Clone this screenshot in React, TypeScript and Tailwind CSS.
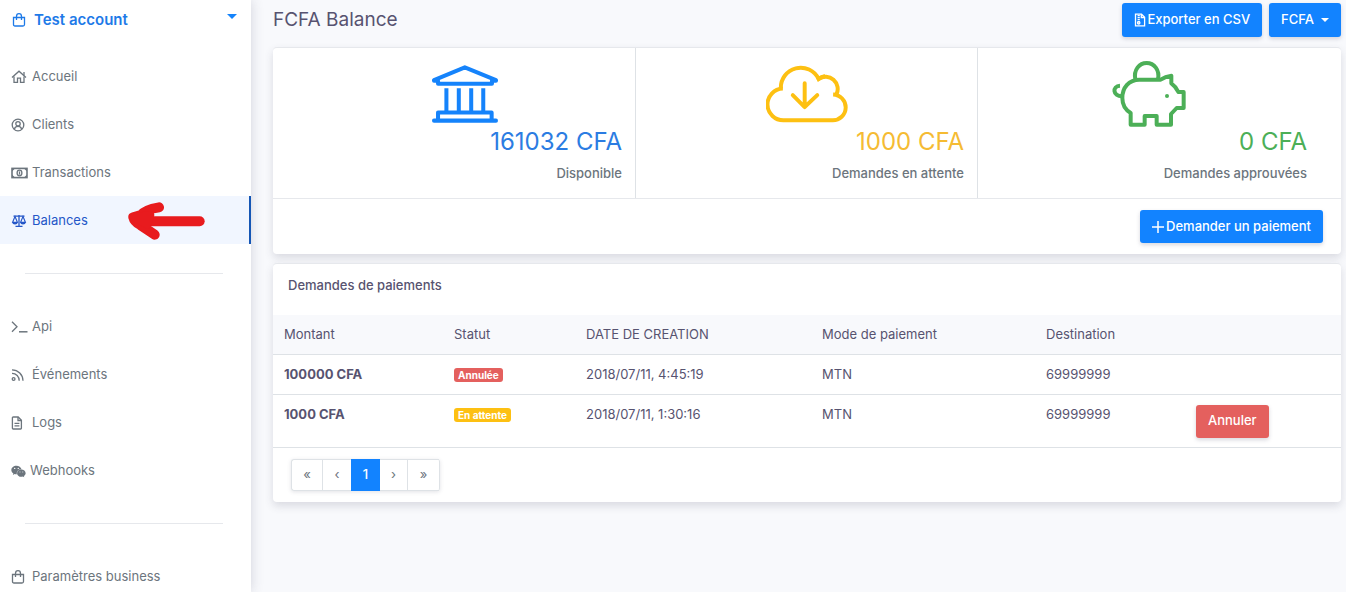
import type { ReactNode } from 'react';
import { FaWeixin } from 'react-icons/fa';

const LineIcon = ({ children }: { children: ReactNode }) => (
  <svg className="h-4 w-[17px] shrink-0" viewBox="0 0 17 16" fill="none" stroke="currentColor" strokeWidth="1.3" aria-hidden="true">
    {children}
  </svg>
);

const BagIcon = () => (
  <LineIcon>
    <path d="M1.5 5.5H12.5V12.5Q12.5 14 11 14H3Q1.5 14 1.5 12.5Z" />
    <path d="M4.5 8V4.5A2.5 2.8 0 0 1 9.5 4.5V8" />
  </LineIcon>
);

const HomeIcon = () => (
  <LineIcon>
    <path d="M1 8.6L8 2.2L15 8.6" />
    <path d="M3 7.5V13.4H6.5V9.2H9.5V13.4H13V7.5M13 3V6.5" />
  </LineIcon>
);

const UserIcon = () => (
  <LineIcon>
    <circle cx="7" cy="8" r="5.8" />
    <circle cx="7" cy="6.8" r="2.2" />
    <path d="M3.4 12Q4 9.4 7 9.4T10.6 12" />
  </LineIcon>
);

const MoneyIcon = () => (
  <LineIcon>
    <rect x="1" y="3.4" width="15" height="9.2" strokeWidth="1.6" />
    <ellipse cx="8.5" cy="8" rx="2.4" ry="2.8" />
    <path d="M8.5 6.4V9.6" />
    <path d="M1 3.5H4L1 6.5ZM16 3.5H13L16 6.5ZM1 12.5H4L1 9.5ZM16 12.5H13L16 9.5Z" fill="currentColor" stroke="none" />
  </LineIcon>
);

const ScaleIcon = () => (
  <LineIcon>
    <path d="M2.5 3.2H13.5M8 2V13.4M4.5 13.4H11.5" />
    <path d="M4 3.5L1.6 9.3H6.4ZM12 3.5L9.6 9.3H14.4Z" strokeWidth="1.1" />
    <path d="M1 9H7Q6.5 11.5 4 11.5T1 9ZM9 9H15Q14.5 11.5 12 11.5T9 9Z" fill="currentColor" stroke="none" />
  </LineIcon>
);

const TerminalIcon = () => (
  <LineIcon>
    <path d="M1 2.8L6 7.8L1 12.8" />
    <path d="M8 12.8H16.5" strokeWidth="1.5" />
  </LineIcon>
);

const FeedIcon = () => (
  <LineIcon>
    <circle cx="2.6" cy="12" r="1.4" />
    <path d="M1 6.3A7.2 7.2 0 0 1 8.2 13.8M1 2.8A11 11 0 0 1 12 13.8" />
  </LineIcon>
);

const FileIcon = () => (
  <LineIcon>
    <path d="M1.4 2.8Q1.4 2 2.2 2H7.2L10.4 5.2V13.2Q10.4 14 9.6 14H2.2Q1.4 14 1.4 13.2Z" />
    <path d="M7 2V5.5H10.4M3.5 8.3H8.4M3.5 10.8H8.4" />
  </LineIcon>
);

const ZipIcon = () => (
  <svg className="h-3.5 w-[13px]" viewBox="0 0 13 14" fill="none" stroke="currentColor" strokeWidth="1.3" aria-hidden="true">
    <path d="M1.5 1.2H7.5L10.6 4.2V12.8H1.5Z" />
    <path d="M7.3 1.2V4.5H10.6" />
    <path d="M4.7 2V10.5" strokeWidth="2.2" strokeDasharray="1.2 0.7" />
    <circle cx="4.7" cy="9.8" r="1.2" />
  </svg>
);

const PlusIcon = () => (
  <svg className="h-3 w-3" viewBox="0 0 12 12" fill="none" stroke="currentColor" strokeWidth="1.5" aria-hidden="true">
    <path d="M0 6H12M6 0V12" />
  </svg>
);

type NavItemProps = {
  icon: ReactNode;
  label: string;
  active?: boolean;
  children?: ReactNode;
};

const NavItem = ({ icon, label, active, children }: NavItemProps) => {
  return (
    <li className="relative">
      <a
        href="#"
        className={
          active
            ? 'flex h-12 items-center gap-1 border-r-2 border-[#1556b5] bg-[#f1f6ff] pt-0.5 pl-[11px] text-[#2456c8]'
            : 'flex h-12 items-center gap-1 pt-0.5 pl-[11px] text-[#6c757d] hover:text-[#1e7cf0]'
        }
      >
        {icon}
        {label}
      </a>
      {children}
    </li>
  );
};

const Divider = () => <hr className="mr-7 mb-7 ml-[25px] mt-[29px] border-[#e6e8ec]" />;

const RedArrow = () => (
  <svg className="absolute top-[5px] left-[127px] h-10 w-[79px]" viewBox="0 0 237 120" fill="none" stroke="#e81b1e" strokeWidth="30" strokeLinecap="round" strokeLinejoin="round" aria-hidden="true">
    <path d="M35 61H218" />
    <path d="M96 19Q54 26 42 42L19 49Q22 62 40 72L83 101" />
    <path d="M20 49L70 42L60 70Z" fill="#e81b1e" strokeWidth="24" />
  </svg>
);

const BankIcon = () => (
  <svg className="h-[58px] w-[66px]" viewBox="96 62 197 173" fill="none" stroke="#1583fb" strokeWidth="12" strokeLinejoin="round" aria-hidden="true">
    <path d="M102 109V107L194 69L287 107V109H275V118H114V109Z" />
    <path d="M139 131V200M176 131V200M213 131V200M249 131V200" />
    <path d="M114 228V204H274V228" />
    <path d="M102 228H287" strokeLinecap="round" />
  </svg>
);

const CloudIcon = () => (
  <svg className="h-[58px] w-[82px]" viewBox="77 62 248 173" fill="none" stroke="#fdc012" strokeWidth="12" aria-hidden="true">
    <path d="M122 132A60 60 0 0 1 236 103A37 37 0 0 1 290 150" />
    <path d="M128 132A48 48 0 0 0 131 228H278A39 39 0 0 0 280 150" />
    <path d="M232 106Q242 98 256 94" />
    <path d="M194 116V188M158 152L194 188L232 152" strokeLinecap="round" strokeLinejoin="round" />
  </svg>
);

const PigIcon = () => (
  <svg className="h-[66px] w-[74px]" viewBox="68 185 222 198" fill="none" stroke="#4caf57" strokeWidth="12" strokeLinejoin="round" aria-hidden="true">
    <path d="M124 376V341C106 330 99 312 99 296C99 265 119 241 150 241H214Q228 231 246 229V252Q260 262 267 278H283V326H262L245 344V376H202V350H166V376Z" />
    <path d="M138 240C132 212 150 191 172 191S212 212 206 240" />
    <path d="M98 291C70 291 68 260 92 259" />
    <circle cx="233" cy="290" r="6" fill="#4caf57" stroke="none" />
  </svg>
);

const Sidebar = () => {
  return (
    <aside className="z-10 w-[251px] shrink-0 bg-white shadow-[0_0_12px_rgba(60,60,90,0.2)]">
      <button type="button" className="flex h-[52px] w-full items-start pt-2 pr-3.5 pl-3 text-[15px] font-semibold text-[#1e7ae8]">
        <span className="mt-1">
          <BagIcon />
        </span>
        <span className="ml-[5px] leading-6">Test account</span>
        <span className="mt-1.5 ml-auto border-x-[5px] border-t-[5px] border-x-transparent border-t-[#1583fb]" />
      </button>
      <nav>
        <ul>
          <NavItem icon={<HomeIcon />} label="Accueil" />
          <NavItem icon={<UserIcon />} label="Clients" />
          <NavItem icon={<MoneyIcon />} label="Transactions" />
          <NavItem icon={<ScaleIcon />} label="Balances" active>
            <RedArrow />
          </NavItem>
        </ul>
        <Divider />
        <ul>
          <NavItem icon={<TerminalIcon />} label="Api" />
          <NavItem icon={<FeedIcon />} label="Événements" />
          <NavItem icon={<FileIcon />} label="Logs" />
          <NavItem icon={<FaWeixin className="text-[15px]" />} label="Webhooks" />
        </ul>
        <Divider />
        <ul>
          <NavItem icon={<BagIcon />} label="Paramètres business" />
        </ul>
      </nav>
    </aside>
  );
};

type StatProps = {
  icon: ReactNode;
  amount: string;
  label: string;
  color: string;
  className: string;
};

const Stat = ({ icon, amount, label, color, className }: StatProps) => {
  return (
    <div className={`h-[150px] text-right ${className}`}>
      <div className="flex h-20 items-center justify-center pt-3">{icon}</div>
      <div className={`pr-[13px] text-2xl leading-7 ${color}`}>{amount}</div>
      <div className="mt-[7px] pr-[13px] leading-5 font-medium text-[#6c757d]">{label}</div>
    </div>
  );
};

const BalanceCard = () => {
  return (
    <section className="rounded-sm border-t border-[#e6e8ec] bg-white shadow-[0_4px_8px_rgba(60,60,90,0.16)]">
      <div className="grid grid-cols-3 px-[21px]">
        <Stat icon={<BankIcon />} amount="161032 CFA" label="Disponible" color="text-[#2b7ce2]" className="border-r border-[#dee2e6]" />
        <Stat icon={<CloudIcon />} amount="1000 CFA" label="Demandes en attente" color="text-[#f5bb33]" className="border-r border-[#dee2e6]" />
        <Stat icon={<PigIcon />} amount="0 CFA" label="Demandes approuvées" color="text-[#4caf57]" className="" />
      </div>
      <div className="flex justify-end border-t border-[#e6e8ec] px-[18px] py-[11px]">
        <button type="button" className="flex h-[33px] items-center gap-0.5 rounded-[3px] bg-[#1283ff] px-3 font-medium text-white shadow-[0_2px_4px_rgba(60,60,90,0.2)]">
          <PlusIcon />
          Demander un paiement
        </button>
      </div>
    </section>
  );
};

const requests = [
  { amount: '100000 CFA', status: 'Annulée', date: '2018/07/11, 4:45:19', mode: 'MTN', destination: '69999999', pending: false },
  { amount: '1000 CFA', status: 'En attente', date: '2018/07/11, 1:30:16', mode: 'MTN', destination: '69999999', pending: true },
];

const Pagination = () => {
  const link = 'flex h-8 items-center justify-center border-l border-[#dee2e6]';
  return (
    <nav aria-label="Pagination" className="flex px-[18px] py-[11px]">
      <div className="flex rounded-[3px] border-r border-[#dee2e6] text-[#6c757d] shadow-[0_1px_4px_rgba(60,60,90,0.15)]">
        <button type="button" className={`${link} w-[31px] rounded-l-[3px] border-y`}>«</button>
        <button type="button" className={`${link} w-[29px] border-y`}>‹</button>
        <button type="button" className="h-8 w-[29px] bg-[#1283ff] font-medium text-white">1</button>
        <button type="button" className="h-8 w-[27px] border-y border-[#dee2e6]">›</button>
        <button type="button" className={`${link} w-8 border-y`}>»</button>
      </div>
    </nav>
  );
};

const RequestsCard = () => {
  return (
    <section className="mt-[9px] rounded-sm border-t border-[#e6e8ec] bg-white shadow-[0_4px_8px_rgba(60,60,90,0.16)]">
      <h2 className="px-[15px] pt-[11px] pb-5 leading-5 font-medium">Demandes de paiements</h2>
      <table className="w-full table-fixed text-left">
        <colgroup>
          <col className="w-[170px]" />
          <col className="w-[132px]" />
          <col className="w-[236px]" />
          <col className="w-[224px]" />
          <col className="w-[150px]" />
          <col className="w-[156px]" />
        </colgroup>
        <thead className="bg-[#f8f9fc]">
          <tr className="h-[39px] border-b border-[#dee2e6]">
            <th className="px-[11px] font-normal">Montant</th>
            <th className="px-[11px] font-normal">Statut</th>
            <th className="px-[11px] font-normal">DATE DE CREATION</th>
            <th className="px-[11px] font-normal">Mode de paiement</th>
            <th className="px-[11px] font-normal">Destination</th>
            <th aria-label="Actions"></th>
          </tr>
        </thead>
        <tbody>
          {requests.map((r) => (
            <tr key={r.date} className="border-b border-[#dee2e6] align-top">
              <td className="px-[11px] py-2.5 leading-[19px] font-bold">{r.amount}</td>
              <td className="px-[11px] py-2.5 leading-[19px]">
                <span
                  className={
                    r.pending
                      ? 'inline-block rounded-[3px] bg-[#fdc012] px-1 text-[10px] leading-[14px] font-bold text-white'
                      : 'inline-block rounded-[3px] bg-[#e4605e] px-1 text-[10px] leading-[14px] font-bold text-white'
                  }
                >
                  {r.status}
                </span>
              </td>
              <td className="px-[11px] py-2.5 leading-[19px]">{r.date}</td>
              <td className="px-[11px] py-2.5 leading-[19px]">{r.mode}</td>
              <td className="px-[11px] py-2.5 leading-[19px]">{r.destination}</td>
              <td className={r.pending ? 'px-[11px] pt-2.5 pb-[9px]' : ''}>
                {r.pending && (
                  <button type="button" className="block h-[33px] rounded-[3px] bg-[#e4605e] px-3 font-medium text-white shadow-[0_2px_4px_rgba(60,60,90,0.2)]">
                    Annuler
                  </button>
                )}
              </td>
            </tr>
          ))}
        </tbody>
      </table>
      <Pagination />
    </section>
  );
};

const App = () => {
  return (
    <div className="flex h-screen overflow-hidden bg-[#f8f9fc] font-['Inter',sans-serif] text-[13px] text-[#575370]">
      <Sidebar />
      <main className="min-w-0 flex-1 pr-[5px] pl-[22px]">
        <header className="flex h-[47px] items-start justify-between pt-[3px]">
          <h1 className="text-[19px] leading-[34px]">FCFA Balance</h1>
          <div className="flex gap-[7px]">
            <button type="button" className="flex h-[34px] items-center rounded-[3px] bg-[#1283ff] px-3 font-medium text-white shadow-[0_2px_4px_rgba(60,60,90,0.2)]">
              <ZipIcon />
              Exporter en CSV
            </button>
            <button type="button" className="flex h-[34px] items-center gap-[7px] rounded-[3px] bg-[#1283ff] px-3 font-medium text-white shadow-[0_2px_4px_rgba(60,60,90,0.2)]">
              FCFA
              <span className="border-x-4 border-t-4 border-x-transparent border-t-white" />
            </button>
          </div>
        </header>
        <BalanceCard />
        <RequestsCard />
      </main>
    </div>
  );
};

export default App;
